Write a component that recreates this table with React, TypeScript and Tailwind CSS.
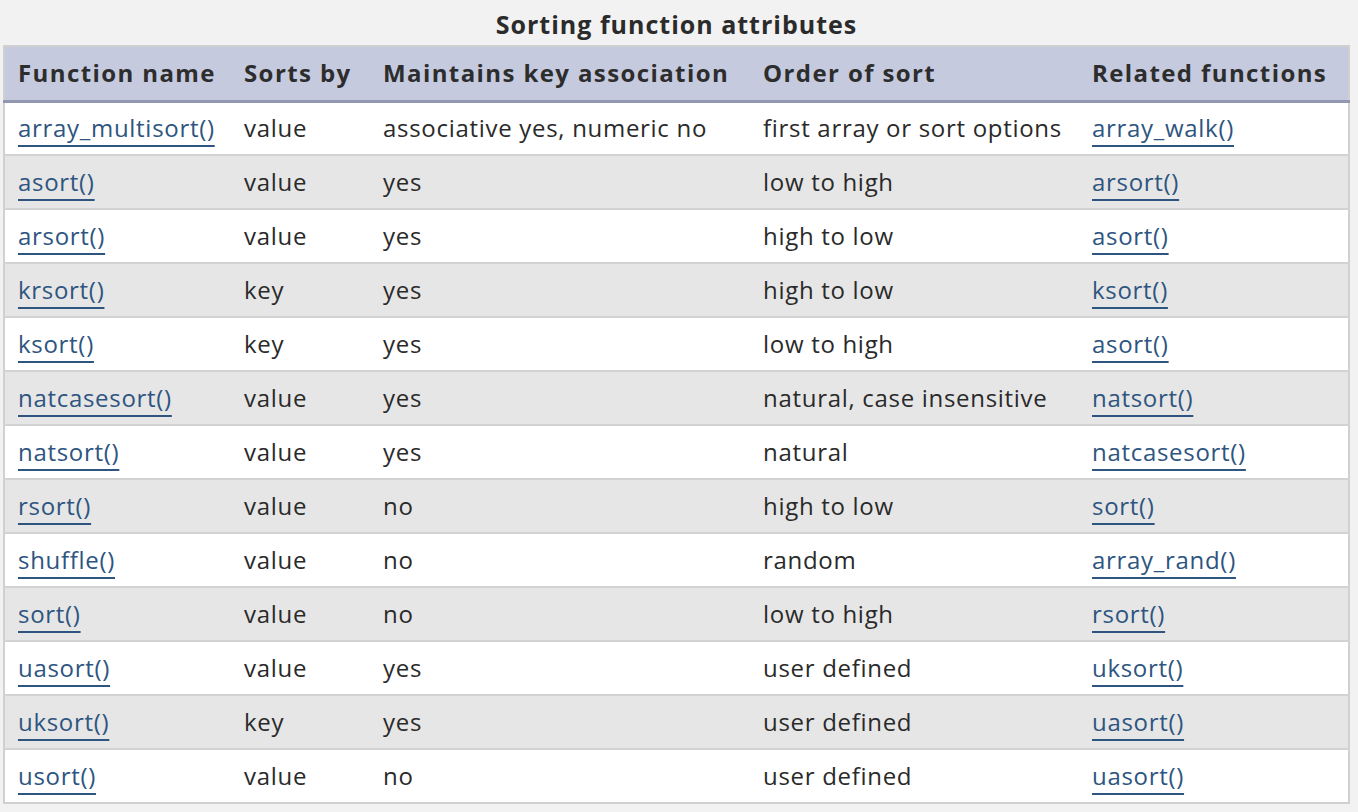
const rows: [string, string, string, string, string][] = [
  ["array_multisort()", "value", "associative yes, numeric no", "first array or sort options", "array_walk()"],
  ["asort()", "value", "yes", "low to high", "arsort()"],
  ["arsort()", "value", "yes", "high to low", "asort()"],
  ["krsort()", "key", "yes", "high to low", "ksort()"],
  ["ksort()", "key", "yes", "low to high", "asort()"],
  ["natcasesort()", "value", "yes", "natural, case insensitive", "natsort()"],
  ["natsort()", "value", "yes", "natural", "natcasesort()"],
  ["rsort()", "value", "no", "high to low", "sort()"],
  ["shuffle()", "value", "no", "random", "array_rand()"],
  ["sort()", "value", "no", "low to high", "rsort()"],
  ["uasort()", "value", "yes", "user defined", "uksort()"],
  ["uksort()", "key", "yes", "user defined", "uasort()"],
  ["usort()", "value", "no", "user defined", "uasort()"],
];

const headers = ["Function name", "Sorts by", "Maintains key association", "Order of sort", "Related functions"];

function FnLink({ name }: { name: string }) {
  return (
    <a className="text-[#2e5580] underline decoration-[#2e5580] decoration-2 underline-offset-[8px]">
      {name}
    </a>
  );
}

export default function App() {
  return (
    <div className="min-h-[812px] w-[1358px] bg-[#f2f2f2] pt-[4px] font-['Open_Sans','Liberation_Sans',sans-serif] text-[#2a2a2a]">
      <table className="ml-[3px] w-[1345px] table-fixed border-collapse border-2 border-[#d0d0d0] text-[24px] tracking-[0.7px]">
        <caption className="h-[41px] text-[25px] font-bold leading-[40px] tracking-[1px] text-[#2b2b2b]">
          Sorting function attributes
        </caption>
        <colgroup>
          <col className="w-[227px]" />
          <col className="w-[139px]" />
          <col className="w-[380px]" />
          <col className="w-[329px]" />
          <col className="w-[270px]" />
        </colgroup>
        <thead>
          <tr className="h-[55px] border-b-[3px] border-[#9297b1] bg-[#c5cadf]">
            {headers.map((h) => (
              <th key={h} className="px-[13px] text-left font-bold tracking-[1.4px] text-[#2d2d2d]">
                {h}
              </th>
            ))}
          </tr>
        </thead>
        <tbody>
          {rows.map((r, i) => (
            <tr
              key={r[0]}
              className={`h-[54px] border-t-2 border-[#d3d3d3] ${i % 2 === 1 ? "bg-[#e6e6e6]" : "bg-white"}`}
            >
              <td className="px-[13px] whitespace-nowrap"><FnLink name={r[0]} /></td>
              <td className="px-[13px] whitespace-nowrap">{r[1]}</td>
              <td className="px-[13px] whitespace-nowrap">{r[2]}</td>
              <td className="px-[13px] whitespace-nowrap">{r[3]}</td>
              <td className="px-[13px] whitespace-nowrap"><FnLink name={r[4]} /></td>
            </tr>
          ))}
        </tbody>
      </table>
    </div>
  );
}
